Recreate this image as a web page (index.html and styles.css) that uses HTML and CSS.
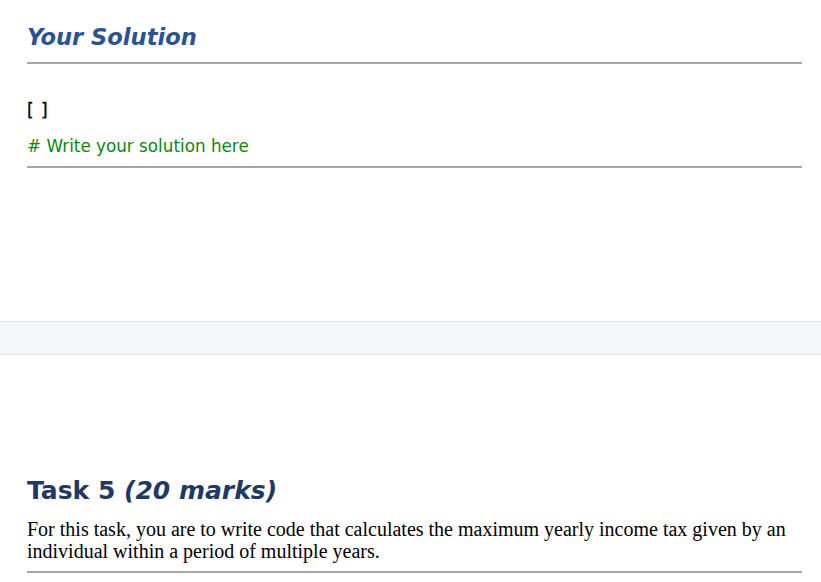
FILE: index.html
```html
<!DOCTYPE html>
<html>
<head>
<meta charset="utf-8">
<link rel="stylesheet" href="styles.css">
</head>
<body>
<div class="cell">
  <h2 class="sol-title">Your Solution</h2>
  <div class="code">
    <div class="prompt">[ ]</div>
    <div class="comment"># Write your solution here</div>
  </div>
</div>
<div class="band"></div>
<div class="cell task">
  <h2 class="task-title">Task 5 <em>(20 marks)</em></h2>
  <p class="desc">For this task, you are to write code that calculates the maximum yearly income tax given by an individual within a period of multiple years.</p>
</div>
</body>
</html>
```
FILE: styles.css
```css
html, body {
  margin: 0;
  padding: 0;
  background: #fff;
}
body {
  font-family: "DejaVu Sans", sans-serif;
}
.cell {
  padding: 0 19px 0 27px;
}
.sol-title {
  margin: 0;
  padding-top: 23px;
  padding-bottom: 11px;
  font-size: 22.6px;
  font-weight: bold;
  font-style: italic;
  color: #2b5394;
  line-height: 28px;
  border-bottom: 2px solid #a6a6a6;
}
.code {
  padding-top: 36px;
  padding-bottom: 10px;
  border-bottom: 2px solid #a6a6a6;
}
.prompt {
  font-size: 17px;
  line-height: 20px;
  letter-spacing: 1px;
  color: #000;
  -webkit-text-stroke: 0.3px #000;
}
.comment {
  margin-top: 16px;
  font-size: 16.8px;
  line-height: 20px;
  color: #0a8a0a;
}
.band {
  margin-top: 153px;
  height: 32px;
  background: #f5f6fa;
  border-top: 1px solid #e3e6ea;
  border-bottom: 1px solid #e3e6ea;
}
.task {
  padding-top: 121px;
}
.task-title {
  margin: 0;
  font-size: 25px;
  font-weight: bold;
  line-height: 30px;
  color: #1f3864;
}
.task-title em {
  font-style: italic;
}
.desc {
  margin: 12px 0 0;
  padding-bottom: 9px;
  font-family: "Liberation Serif", serif;
  font-size: 20px;
  line-height: 22px;
  color: #000;
  border-bottom: 2px solid #a6a6a6;
}
```
